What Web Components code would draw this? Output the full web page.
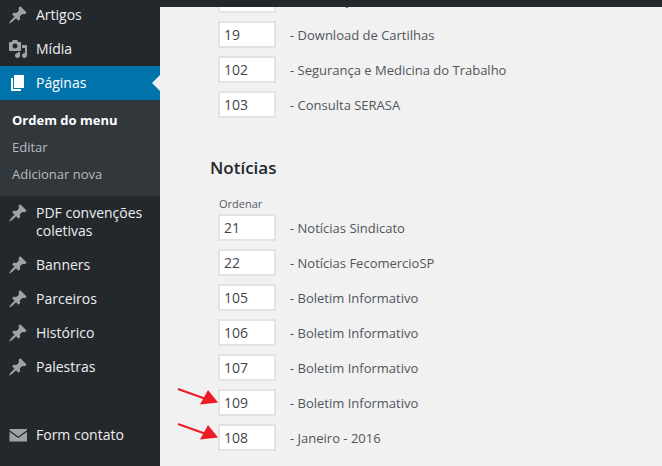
<!DOCTYPE html>
<html>
<head>
<meta charset="utf-8">
<style>
  html, body { margin: 0; height: 466px; overflow: hidden; background: #f1f1f1; }
</style>
</head>
<body>
<admin-page>
  <admin-menu slot="menu">
    <menu-item icon="pin">Artigos</menu-item>
    <menu-item icon="media">Mídia</menu-item>
    <menu-item icon="pages" current>Páginas</menu-item>
    <sub-menu>
      <sub-link strong>Ordem do menu</sub-link>
      <sub-link>Editar</sub-link>
      <sub-link>Adicionar nova</sub-link>
    </sub-menu>
    <menu-item icon="pin">PDF convenções coletivas</menu-item>
    <menu-item icon="pin">Banners</menu-item>
    <menu-item icon="pin">Parceiros</menu-item>
    <menu-item icon="pin">Histórico</menu-item>
    <menu-item icon="pin">Palestras</menu-item>
    <menu-item icon="mail" class="apart">Form contato</menu-item>
  </admin-menu>
  <order-group>
    <order-row value="">- Convenções</order-row>
    <order-row value="19">- Download de Cartilhas</order-row>
    <order-row value="102">- Segurança e Medicina do Trabalho</order-row>
    <order-row value="103">- Consulta SERASA</order-row>
  </order-group>
  <order-group heading="Notícias">
    <order-row value="21">- Notícias Sindicato</order-row>
    <order-row value="22">- Notícias FecomercioSP</order-row>
    <order-row value="105">- Boletim Informativo</order-row>
    <order-row value="106">- Boletim Informativo</order-row>
    <order-row value="107">- Boletim Informativo</order-row>
    <order-row value="109" arrow>- Boletim Informativo</order-row>
    <order-row value="108" arrow>- Janeiro - 2016</order-row>
  </order-group>
</admin-page>
<script>
const ICONS = {
  pin: `<path d="M10.44 3.02l1.82-1.82 6.36 6.35-1.83 1.82c-1.05-.68-2.48-.57-3.41.36l-.75.75c-.92.93-1.04 2.35-.35 3.41l-1.83 1.82-2.41-2.41-2.8 2.79c-.42.42-3.38 2.71-3.8 2.29s1.86-3.39 2.28-3.81l2.79-2.79L4.1 9.36l1.83-1.82c1.05.69 2.48.57 3.4-.36l.75-.75c.93-.92 1.05-2.35.36-3.41z"/>`,
  media: `<path fill-rule="evenodd" d="M13 11V4c0-.55-.45-1-1-1h-1.67L9 1H5L3.67 3H2c-.55 0-1 .45-1 1v7c0 .55.45 1 1 1h10c.55 0 1-.45 1-1zM7 4.500c1.380 0 2.500 1.120 2.500 2.500S8.380 9.500 7 9.500 4.500 8.380 4.500 7 5.620 4.500 7 4.500z"/><path d="M14 6h5v10.500c0 1.380-1.120 2.500-2.500 2.500S14 17.880 14 16.500s1.120-2.500 2.500-2.500c.17 0 .34.02.5.05V9h-3zM10 14.050c-.16-.03-.33-.05-.5-.05-1.380 0-2.500 1.120-2.500 2.500S8.120 19 9.500 19s2.500-1.120 2.500-2.500V13h-2z"/>`,
  pages: `<path d="M6 15V2h10v13H6zm-1 1h8v2H3V5h2v11z"/>`,
  mail: `<path d="M1.500 4H19v1.200l-8.750 6.300L1.500 5.200z"/><path d="M1.500 6.800l8.750 6.300L19 6.800V16.500H1.500z"/>`
};

class AdminPage extends HTMLElement {
  constructor() {
    super();
    this.attachShadow({ mode: "open" }).innerHTML = `
      <style>
        :host { display: grid; grid-template-columns: 160px 1fr; height: 466px; font-family: "Open Sans", sans-serif; }
        .menu { background: #23282d; overflow: hidden; }
        .main { display: flex; flex-direction: column; overflow: hidden; }
        .topbar { height: 7px; background: #23282d; flex: none; position: relative; z-index: 1; }
        .content { margin-top: -21px; padding-left: 58px; display: flex; flex-direction: column; gap: 38px; }
      </style>
      <div class="menu"><slot name="menu"></slot></div>
      <div class="main">
        <div class="topbar"></div>
        <div class="content"><slot></slot></div>
      </div>`;
  }
}
customElements.define("admin-page", AdminPage);

class AdminMenu extends HTMLElement {
  constructor() {
    super();
    this.attachShadow({ mode: "open" }).innerHTML = `
      <style>
        :host { display: block; margin-top: -2px; }
        ::slotted(.apart) { margin-top: 34px; }
      </style>
      <slot></slot>`;
  }
}
customElements.define("admin-menu", AdminMenu);

class MenuItem extends HTMLElement {
  constructor() {
    super();
    const current = this.hasAttribute("current");
    const icon = ICONS[this.getAttribute("icon")];
    this.attachShadow({ mode: "open" }).innerHTML = `
      <style>
        :host { display: flex; position: relative; padding: 8px 8px 8px 36px; color: #eeeeee; font-size: 14px; line-height: 18px; background: ${current ? "#0073aa" : "transparent"}; }
        :host([current]) { color: #fff; }
        svg { position: absolute; left: 8px; top: 7px; width: 20px; height: 20px; fill: ${current ? "#fff" : "#9ea3a8"}; }
        .tip { position: absolute; right: 0; top: 50%; margin-top: -8px; border: 8px solid transparent; border-right-color: #f1f1f1; border-left-width: 0; }
      </style>
      <svg viewBox="0 0 20 20">${icon}</svg>
      <span><slot></slot></span>
      ${current ? '<span class="tip"></span>' : ""}`;
  }
}
customElements.define("menu-item", MenuItem);

class SubMenu extends HTMLElement {
  constructor() {
    super();
    this.attachShadow({ mode: "open" }).innerHTML = `
      <style>
        :host { display: block; background: #32373c; padding: 7px 0 8px; }
      </style>
      <slot></slot>`;
  }
}
customElements.define("sub-menu", SubMenu);

class SubLink extends HTMLElement {
  constructor() {
    super();
    this.attachShadow({ mode: "open" }).innerHTML = `
      <style>
        :host { display: block; padding: 5px 12px; font-size: 13px; line-height: 17px; color: rgba(240,245,250,.7); }
        :host([strong]) { color: #fff; font-weight: 700; }
      </style>
      <slot></slot>`;
  }
}
customElements.define("sub-link", SubLink);

class OrderGroup extends HTMLElement {
  constructor() {
    super();
    const heading = this.getAttribute("heading");
    this.attachShadow({ mode: "open" }).innerHTML = `
      <style>
        :host { display: flex; flex-direction: column; gap: 8px; }
        h2 { margin: 0 0 8px -8px; font-size: 17px; line-height: 24px; font-weight: 600; color: #23282d; }
        .caption { font-size: 11px; line-height: 15px; color: #555d66; margin: 0 0 -5px 1px; }
      </style>
      ${heading ? `<h2>${heading}</h2><div class="caption">Ordenar</div>` : ""}
      <slot></slot>`;
  }
}
customElements.define("order-group", OrderGroup);

class OrderRow extends HTMLElement {
  constructor() {
    super();
    this.attachShadow({ mode: "open" }).innerHTML = `
      <style>
        :host { display: flex; align-items: center; gap: 14px; position: relative; font-size: 13px; color: #50565c; }
        input { box-sizing: border-box; width: 58px; height: 27px; margin: 0; padding: 0 4px; border: 2px solid #e3e3e3; background: #fff; font: 14px "Open Sans", sans-serif; color: #3d464e; outline: 0; }
        svg { position: absolute; left: -42px; top: -2px; width: 44px; height: 24px; }
      </style>
      <input value="${this.getAttribute("value")}">
      <span><slot></slot></span>
      ${this.hasAttribute("arrow") ? `<svg viewBox="0 0 44 24"><path d="M2 2 30 12" stroke="#ed1c24" stroke-width="2" fill="none"/><path d="M42 15.500 32 3 24 17.500z" fill="#ed1c24"/></svg>` : ""}`;
  }
}
customElements.define("order-row", OrderRow);
</script>
</body>
</html>
